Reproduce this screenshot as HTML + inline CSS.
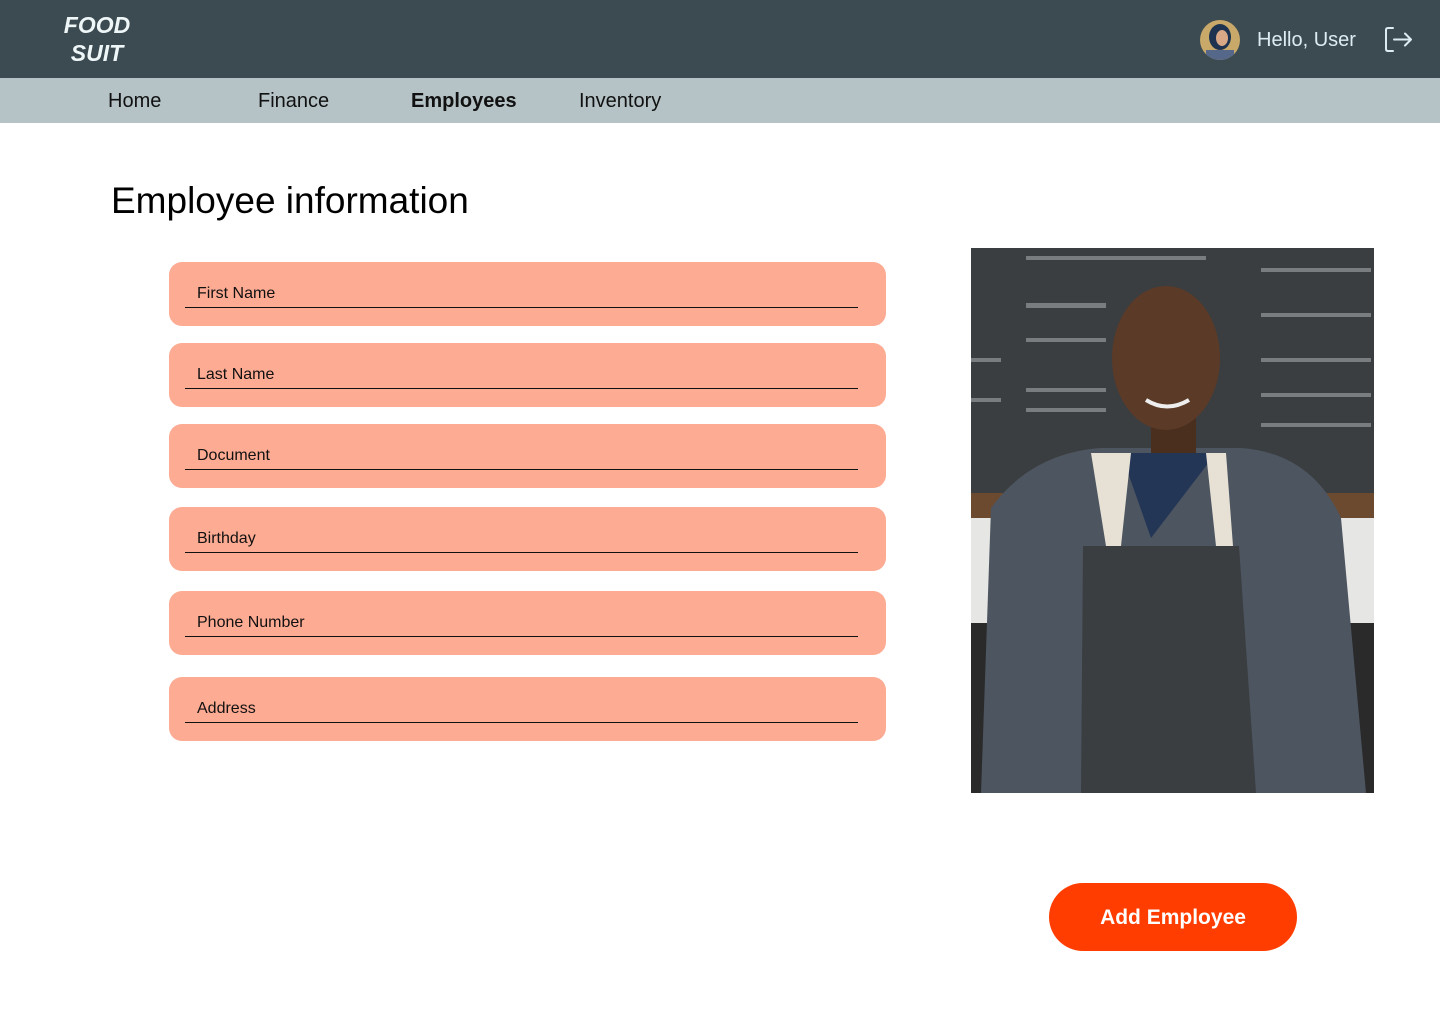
<!DOCTYPE html>
<html><head><meta charset="utf-8"><style>
*{margin:0;padding:0;box-sizing:border-box}
body{width:1440px;height:1024px;background:#fff;font-family:"Liberation Sans",sans-serif;position:relative;overflow:hidden}
.hdr{position:absolute;left:0;top:0;width:1440px;height:78px;background:#3c4b51}
.logo{position:absolute;left:62px;top:11px;color:#eef6f8;font-weight:bold;font-style:italic;font-size:23px;line-height:28px;text-align:center;width:70px}
.nav{position:absolute;left:0;top:78px;width:1440px;height:45px;background:#b5c3c6}
.nav span{position:absolute;top:12px;font-size:20px;color:#111}
h1{position:absolute;left:111px;top:180px;font-size:37px;font-weight:normal;color:#000}
.f{position:absolute;left:169px;width:717px;height:64px;background:#fdab93;border-radius:13px}
.f span{position:absolute;left:28px;top:23px;font-size:16px;color:#111}
.f i{position:absolute;left:16px;right:28px;top:45px;height:1px;background:#111}
.btn{position:absolute;left:1049px;top:883px;width:248px;height:68px;border-radius:34px;background:#ff3d00;color:#fff;font-size:21px;font-weight:bold;text-align:center;line-height:70px}
</style></head><body>
<div class="hdr">
<div class="logo">FOOD<br>SUIT</div>
<svg style="position:absolute;left:1200px;top:20px" width="40" height="40"><defs><clipPath id="c"><circle cx="20" cy="20" r="20"/></clipPath></defs><g clip-path="url(#c)"><rect width="40" height="40" fill="#c9a96a"/><ellipse cx="20" cy="17" rx="11" ry="13" fill="#1e3350"/><ellipse cx="22" cy="18" rx="6" ry="8" fill="#d9a987"/><rect x="6" y="30" width="28" height="12" fill="#56688a"/></g></svg>
<div style="position:absolute;left:1257px;top:29px;color:#dcecf2;font-size:20px">Hello, User</div>
<svg style="position:absolute;left:1384px;top:26px" width="30" height="27" fill="none" stroke="#dcecf2" stroke-width="2" stroke-linecap="round" stroke-linejoin="round"><path d="M9 2H4Q2 2 2 4V23Q2 25 4 25H9"/><path d="M10 13.5H27M21 7.5L27 13.5L21 19.5"/></svg>
</div>
<div class="nav"><span style="left:108px">Home</span><span style="left:258px">Finance</span><span style="left:411px;font-weight:bold">Employees</span><span style="left:579px">Inventory</span></div>
<h1>Employee information</h1>
<div class="f" style="top:262px"><span>First Name</span><i></i></div>
<div class="f" style="top:343px"><span>Last Name</span><i></i></div>
<div class="f" style="top:424px"><span>Document</span><i></i></div>
<div class="f" style="top:507px"><span>Birthday</span><i></i></div>
<div class="f" style="top:591px"><span>Phone Number</span><i></i></div>
<div class="f" style="top:677px"><span>Address</span><i></i></div>
<svg style="position:absolute;left:971px;top:248px" width="403" height="545">
<rect width="403" height="545" fill="#2a2a2a"/>
<rect width="403" height="245" fill="#3b3e40"/>
<g fill="#8a8d8f" opacity=".8"><rect x="55" y="8" width="180" height="4"/><rect x="55" y="55" width="80" height="5"/><rect x="55" y="90" width="80" height="4"/><rect x="55" y="140" width="80" height="4"/><rect x="55" y="160" width="80" height="4"/><rect x="290" y="20" width="110" height="4"/><rect x="290" y="65" width="110" height="4"/><rect x="290" y="110" width="110" height="4"/><rect x="290" y="145" width="110" height="4"/><rect x="290" y="175" width="110" height="4"/><rect x="0" y="110" width="30" height="4"/><rect x="0" y="150" width="30" height="4"/></g>
<rect y="245" width="403" height="25" fill="#6b4a30"/>
<rect y="270" width="403" height="105" fill="#e6e6e4"/>
<path d="M10 545L20 260Q60 205 130 200L270 200Q340 205 370 270L395 545Z" fill="#4d5560"/>
<path d="M150 205L180 290L245 205Z" fill="#243656"/>
<path d="M120 205L135 298L150 298L160 205Z M235 205L245 298L262 298L255 205Z" fill="#e6e1d4"/>
<path d="M112 298L268 298L285 545L110 545Z" fill="#3a3e40"/>
<rect x="180" y="160" width="45" height="45" fill="#4a2e1e"/>
<ellipse cx="195" cy="110" rx="54" ry="72" fill="#5b3a27"/>
<path d="M175 152Q196 165 218 152" stroke="#eee" stroke-width="4" fill="none"/>
</svg>
<div class="btn">Add Employee</div>
</body></html>
